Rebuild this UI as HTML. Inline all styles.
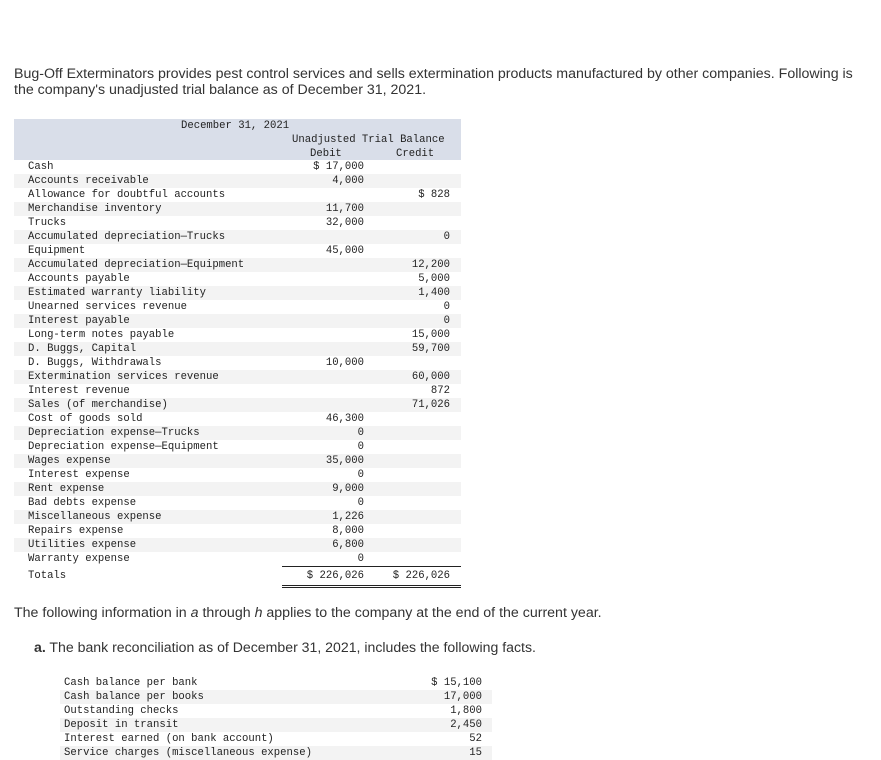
<!DOCTYPE html>
<html><head><meta charset="utf-8"><style>
body{margin:0;width:881px;height:748px;overflow:hidden;background:#fff;position:relative;font-family:"Liberation Sans",sans-serif;color:#333;}
.p{position:absolute;font-size:14.2px;line-height:16px;white-space:nowrap}
.m{font-family:"Liberation Mono",monospace;font-size:10.6px;color:#222}
.tb{position:absolute;left:14px;width:447px;top:119px}
.hd{background:#d9dee9;height:41px;position:relative}
.r{height:14px;line-height:14px;position:relative}
.r:nth-child(even){background:#f3f3f3}
.l{position:absolute;left:14px}
.d{position:absolute;right:97px}
.c{position:absolute;right:11px}
.a{position:absolute;white-space:nowrap}
.t2{position:absolute;left:60px;width:432px;top:676px}
.t2 .r:nth-child(even){background:#f3f3f3}
.t2 .l{left:4px}.t2 .v{position:absolute;right:10px}
</style></head><body>
<div class="p" style="left:14px;top:66px">Bug-Off Exterminators provides pest control services and sells extermination products manufactured by other companies. Following is<br>the company's unadjusted trial balance as of December 31, 2021.</div>
<div class="tb m">
<div class="hd"><span class="a" style="left:167px;top:0;line-height:14px">December 31, 2021</span><span class="a" style="left:278px;top:14px;line-height:14px">Unadjusted Trial Balance</span><span class="a" style="left:296px;top:28px;line-height:14px">Debit</span><span class="a" style="left:382px;top:28px;line-height:14px">Credit</span></div>
<div id="rows"></div>
</div>
<div class="p" style="left:14px;top:605px;font-size:14.2px">The following information in <i>a</i> through <i>h</i> applies to the company at the end of the current year.</div>
<div class="p" style="left:34px;top:639px;font-size:14.1px"><b>a.</b> The bank reconciliation as of December 31, 2021, includes the following facts.</div>
<div class="t2 m">
<div class="r"><span class="l">Cash balance per bank</span><span class="v">$ 15,100</span></div>
<div class="r"><span class="l">Cash balance per books</span><span class="v">17,000</span></div>
<div class="r"><span class="l">Outstanding checks</span><span class="v">1,800</span></div>
<div class="r"><span class="l">Deposit in transit</span><span class="v">2,450</span></div>
<div class="r"><span class="l">Interest earned (on bank account)</span><span class="v">52</span></div>
<div class="r"><span class="l">Service charges (miscellaneous expense)</span><span class="v">15</span></div>
</div>
<script>
var d=[["Cash","$ 17,000",""],["Accounts receivable","4,000",""],["Allowance for doubtful accounts","","$ 828"],["Merchandise inventory","11,700",""],["Trucks","32,000",""],["Accumulated depreciation—Trucks","","0"],["Equipment","45,000",""],["Accumulated depreciation—Equipment","","12,200"],["Accounts payable","","5,000"],["Estimated warranty liability","","1,400"],["Unearned services revenue","","0"],["Interest payable","","0"],["Long-term notes payable","","15,000"],["D. Buggs, Capital","","59,700"],["D. Buggs, Withdrawals","10,000",""],["Extermination services revenue","","60,000"],["Interest revenue","","872"],["Sales (of merchandise)","","71,026"],["Cost of goods sold","46,300",""],["Depreciation expense—Trucks","0",""],["Depreciation expense—Equipment","0",""],["Wages expense","35,000",""],["Interest expense","0",""],["Rent expense","9,000",""],["Bad debts expense","0",""],["Miscellaneous expense","1,226",""],["Repairs expense","8,000",""],["Utilities expense","6,800",""],["Warranty expense","0",""]];
var h="";d.forEach(function(x){h+='<div class="r"><span class="l">'+x[0]+'</span><span class="d">'+x[1]+'</span><span class="c">'+x[2]+'</span></div>';});
h+='<div class="r" style="height:22px;line-height:20px;background:#fff"><span class="a" style="left:268px;right:0;top:0;border-top:1px solid #222"></span><span class="l">Totals</span><span class="d">$ 226,026</span><span class="c">$ 226,026</span><span class="a" style="left:268px;right:0;top:19px;height:1px;border-top:1px solid #222;border-bottom:1px solid #222"></span></div>';
document.getElementById("rows").innerHTML=h;
</script>
</body></html>
